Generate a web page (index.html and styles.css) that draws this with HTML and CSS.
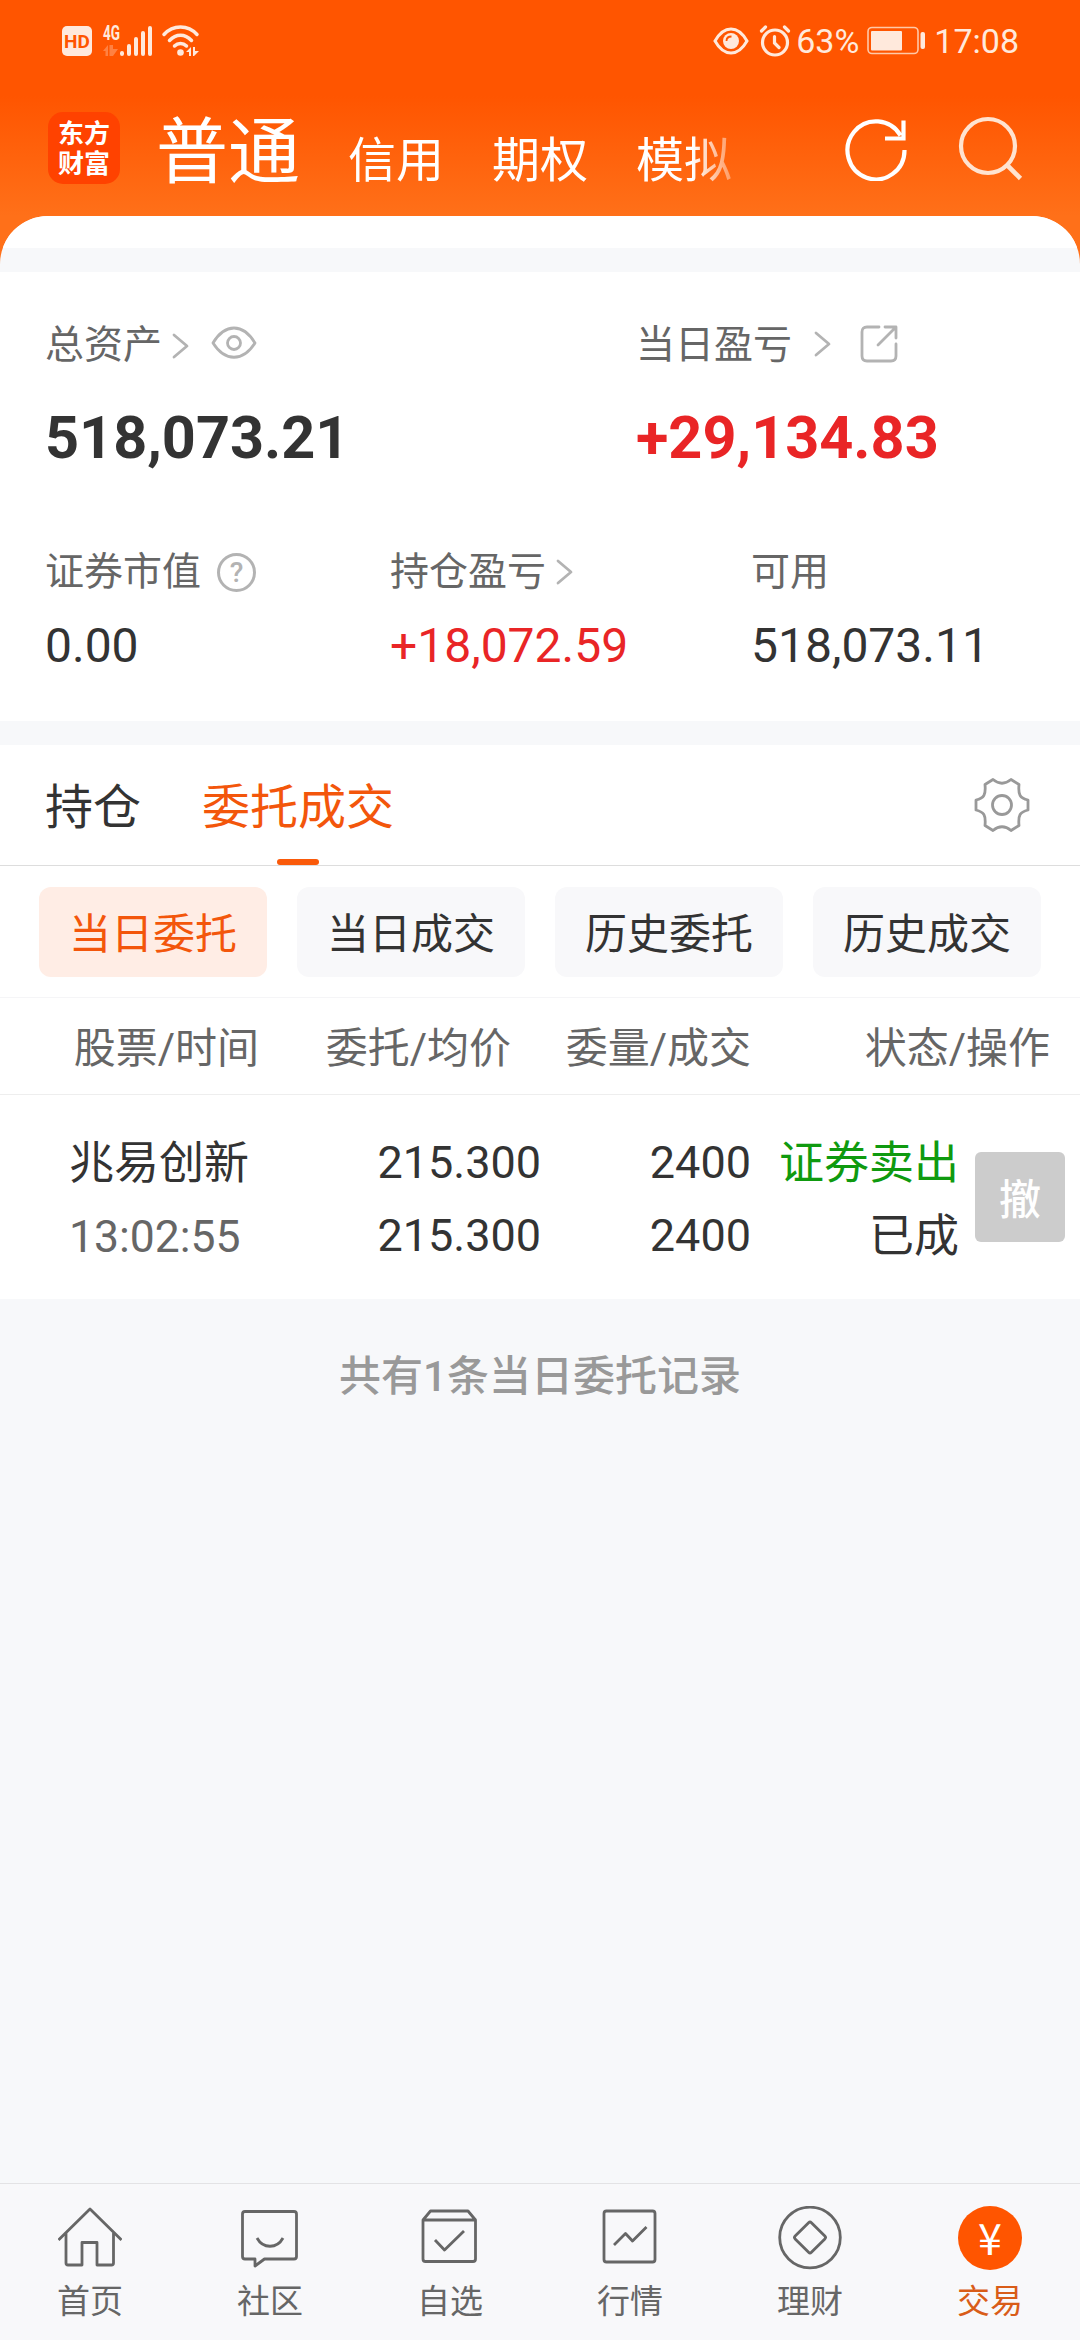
FILE: index.html
```html
<!DOCTYPE html>
<html lang="zh-CN">
<head>
    <meta charset="UTF-8">
    <meta name="viewport" content="width=device-width, initial-scale=1.0">
    <title>交易</title>
    <link rel="stylesheet" href="styles.css">
</head>
<body>
    <header class="header">
        <div class="status-bar">
            <div class="status-left">
                <span class="hd">HD</span>
                <svg class="signal" width="50" height="32" viewBox="0 0 50 32">
                    <text x="0" y="15" font-size="20" font-weight="700" textLength="17" lengthAdjust="spacingAndGlyphs">4G</text>
                    <path opacity=".3" d="M0 26l5-6v11h-2.500v-5zM6.500 20h2.500v11h-2.500zM9 20h1v4h5l-5 7h-1z"/>
                    <path stroke="#ffe9dc" stroke-width="4" stroke-linecap="round" d="M19 28v1M26 21v8M33 14v15M40 8v21M47 3v26"/>
                </svg>
                <svg class="wifi" width="38" height="32" viewBox="0 0 38 32">
                    <g fill="none" stroke="#ffe9dc" stroke-width="3.500" stroke-linecap="round">
                        <path d="M2 9.500C11-.5 26-.5 35 9.500"/>
                        <path d="M7.500 15.500C14 8.500 23 8.500 29.500 15.500"/>
                        <path d="M12.500 21C16 17.500 21 17.500 24.500 21"/>
                    </g>
                    <circle cx="18.500" cy="27.500" r="3.300"/>
                    <path d="M24 27l5-5v9h-2v-4zM31 22h2v4h4l-5 5h-1z"/>
                </svg>
            </div>
            <div class="status-right">
                <svg width="36" height="28" viewBox="0 0 36 28">
                    <path fill="none" stroke="#ffe9dc" stroke-width="3" d="M2 14C11-2 25-2 34 14C25 30 11 30 2 14z"/>
                    <circle cx="18" cy="14" r="8"/>
                    <path fill="none" stroke="#ff5500" stroke-width="1.800" d="M13.500 14q0-4.500 5-4.500"/>
                </svg>
                <svg class="alarm" width="32" height="32" viewBox="0 0 32 32">
                    <g fill="none" stroke="#ffe9dc" stroke-width="3.200" stroke-linecap="round">
                        <circle cx="16" cy="17.500" r="12.500"/>
                        <path d="M2.500 6L6.500 2M29.500 6L25.500 2M15.500 11.500V18L20 22.500"/>
                    </g>
                </svg>
                <span class="battery-text">63%</span>
                <svg class="battery" width="60" height="30" viewBox="0 0 60 30">
                    <rect x="1" y="1.500" width="50" height="26" rx="4" fill="none" stroke="#ffc9a8" stroke-width="1.600"/>
                    <rect x="4" y="5" width="31" height="19.500" rx="1"/>
                    <rect x="53.500" y="6" width="4.500" height="17" rx="2"/>
                </svg>
                <span>17:08</span>
            </div>
        </div>
        <nav class="top-nav">
            <div class="logo">东方<br>财富</div>
            <div class="accounts">
                <span class="account current">普通</span>
                <span class="account">信用</span>
                <span class="account">期权</span>
                <span class="account">模拟</span>
            </div>
            <svg class="refresh" width="64" height="64" viewBox="0 0 64 64">
                <path fill="none" stroke="#fff" stroke-width="4.200" d="M60.500 33A28.500 29 0 1 1 56.500 18.500M59.500 3.500V21.500H41"/>
            </svg>
            <svg class="search" width="66" height="66" viewBox="0 0 66 66">
                <circle cx="30" cy="30" r="27" fill="none" stroke="#ffe3d0" stroke-width="4.200"/>
                <path stroke="#ffe3d0" stroke-width="4.600" d="M48.500 48.500L62.500 62.500"/>
            </svg>
        </nav>
    </header>

    <main class="sheet">
        <div class="sheet-top"></div>
        <section class="assets">
            <div class="assets-main">
                <div class="asset">
                    <div class="label">
                        <span>总资产</span>
                        <svg class="chevron near" width="18" height="28" viewBox="0 0 18 28"><path d="M2 3L15 14L2 25"/></svg>
                        <svg class="eye" width="46" height="34" viewBox="0 0 46 34">
                            <path d="M2 17C14-3 32-3 44 17C32 36 14 36 2 17z"/>
                            <circle cx="23" cy="17" r="6.500"/>
                        </svg>
                    </div>
                    <div class="big">518,073.21</div>
                </div>
                <div class="asset">
                    <div class="label">
                        <span>当日盈亏</span>
                        <svg class="chevron far" width="18" height="28" viewBox="0 0 18 28"><path d="M2 3L15 14L2 25"/></svg>
                        <svg class="share" width="40" height="40" viewBox="0 0 40 40">
                            <path d="M20 3H8Q3 3 3 8V32Q3 37 8 37H32Q37 37 37 32V20M26 3H37V14M36 4L19 21"/>
                        </svg>
                    </div>
                    <div class="big red">+29,134.83</div>
                </div>
            </div>
            <div class="assets-sub">
                <div class="asset">
                    <div class="label"><span>证券市值</span><div class="help">?</div></div>
                    <div class="value">0.00</div>
                </div>
                <div class="asset">
                    <div class="label">
                        <span>持仓盈亏</span>
                        <svg class="chevron near" width="18" height="28" viewBox="0 0 18 28"><path d="M2 3L15 14L2 25"/></svg>
                    </div>
                    <div class="value red">+18,072.59</div>
                </div>
                <div class="asset">
                    <div class="label"><span>可用</span></div>
                    <div class="value">518,073.11</div>
                </div>
            </div>
        </section>

        <section class="orders">
            <div class="tabs">
                <span class="tab">持仓</span>
                <span class="tab active">委托成交</span>
                <svg class="gear" width="58" height="58" viewBox="-29 -29 58 58">
                    <path d="M-9-25.500Q0-18 9-25.500L17-20.500C16-10 18-7 26-5V5C18 7 16 10 17 20.500L9 25.500Q0 18-9 25.500L-17 20.500C-16 10-18 7-26 5V-5C-18-7-16-10-17-20.500Z"/>
                    <circle r="9.500"/>
                </svg>
            </div>
            <div class="chips">
                <span class="chip active">当日委托</span>
                <span class="chip">当日成交</span>
                <span class="chip">历史委托</span>
                <span class="chip">历史成交</span>
            </div>
            <div class="table-head">
                <span>股票/时间</span>
                <span>委托/均价</span>
                <span>委量/成交</span>
                <span>状态/操作</span>
            </div>
            <div class="order-row">
                <div class="stock">兆易创新<br><span class="time">13:02:55</span></div>
                <div>215.300<br>215.300</div>
                <div>2400<br>2400</div>
                <div class="state"><span class="green">证券卖出</span><br>已成</div>
                <button class="cancel">撤</button>
            </div>
        </section>
        <p class="summary">共有1条当日委托记录</p>
    </main>

    <footer class="bottom-nav">
        <div class="nav-item">
            <svg width="64" height="64" viewBox="0 0 64 64">
                <path d="M.5 34L32 3L63.500 34M8 27V57q0 2 2 2H24V36.500H39V59H53.500q2 0 2-2V27"/>
            </svg>
            <span>首页</span>
        </div>
        <div class="nav-item">
            <svg width="64" height="64" viewBox="0 0 64 64">
                <path d="M7 5.500H56q2.500 0 2.500 2.500V50.500q0 2.500-2.500 2.500H26.500L17 60V53H7q-2.500 0-2.500-2.500V8q0-2.500 2.500-2.500z"/>
                <path d="M19 32C25 43 39 43 45 32"/>
            </svg>
            <span>社区</span>
        </div>
        <div class="nav-item">
            <svg width="64" height="64" viewBox="0 0 64 64">
                <path d="M5 14V53q0 2.500 2.500 2.500H55q2.500 0 2.500-2.500V14zL12.500 5H50L57.500 14M17 34L26.500 44L46 25"/>
            </svg>
            <span>自选</span>
        </div>
        <div class="nav-item">
            <svg width="64" height="64" viewBox="0 0 64 64">
                <rect x="6" y="5" width="51" height="51" rx="2.500"/>
                <path d="M16 39L27.500 27.500L34.500 35L48.500 21"/>
            </svg>
            <span>行情</span>
        </div>
        <div class="nav-item">
            <svg width="64" height="64" viewBox="0 0 64 64">
                <circle cx="32" cy="31.500" r="30.300"/>
                <rect x="20.500" y="20" width="23" height="23" rx="2" transform="rotate(45 32 31.500)"/>
            </svg>
            <span>理财</span>
        </div>
        <div class="nav-item active">
            <div class="yen">¥</div>
            <span>交易</span>
        </div>
    </footer>
</body>
</html>
```
FILE: styles.css
```css
* {
    box-sizing: border-box;
}
body {
    margin: 0;
    width: 1080px;
    height: 2340px;
    display: flex;
    flex-direction: column;
    font-family: Roboto, "Noto Sans CJK SC", sans-serif;
    color: #333;
    background: #f7f8fa;
}
svg {
    display: block;
    flex: none;
}

/* header */
.header {
    height: 264px;
    background: linear-gradient(#ff5500 0, #ff5500 96px, #ff7019 216px);
    color: #fff;
}
.status-bar {
    height: 82px;
    display: flex;
    justify-content: space-between;
    align-items: center;
    padding: 0 61px 0 62px;
    font-size: 34px;
    color: #ffe9dc;
}
.status-bar svg {
    fill: #ffe9dc;
    overflow: visible;
}
.status-left,
.status-right {
    display: flex;
    align-items: center;
}
.hd {
    width: 30px;
    height: 30px;
    line-height: 31px;
    border-radius: 5px;
    background: #ffe9dc;
    color: #ff5500;
    font-size: 19px;
    font-weight: 700;
    text-align: center;
}
.signal {
    margin: 0 9px 0 11px;
}
.alarm {
    margin: 0 5px 0 10px;
}
.battery {
    margin: 0 7px 0 8px;
}
.top-nav {
    height: 134px;
    display: flex;
    align-items: center;
    padding: 0 56px 0 48px;
}
.logo {
    width: 72px;
    height: 72px;
    margin-top: -2px;
    padding-top: 7px;
    border-radius: 15px;
    background: #ff4200;
    font-size: 26px;
    font-weight: 700;
    line-height: 30px;
    text-align: center;
}
.accounts {
    width: 640px;
    margin-left: 36px;
    padding-top: 16px;
    display: flex;
    gap: 48px;
    align-items: baseline;
    font-size: 48px;
    line-height: 80px;
    -webkit-mask-image: linear-gradient(90deg, #000 536px, transparent 596px);
    mask-image: linear-gradient(90deg, #000 536px, transparent 596px);
}
.account {
    padding-top: 2px;
}
.account.current {
    padding-top: 0;
    margin-bottom: 3px;
    font-size: 72px;
}
.refresh {
    margin-left: 48px;
}
.search {
    margin-left: 50px;
}

/* assets */
.sheet {
    margin-top: -48px;
    border-radius: 48px 48px 0 0;
    overflow: hidden;
    background: #f7f8fa;
}
.sheet-top {
    height: 32px;
    margin-bottom: 24px;
    background: #fff;
}
.assets {
    height: 449px;
    padding: 49px 0 0 45px;
    background: #fff;
}
.assets-main {
    display: grid;
    grid-template-columns: 591px 1fr;
}
.assets-sub {
    display: grid;
    grid-template-columns: 345px 361px 1fr;
    margin-top: 73px;
}
.label {
    display: flex;
    align-items: center;
    height: 50px;
    font-size: 39px;
    line-height: 50px;
    color: #666;
}
.label span {
    padding-bottom: 3px;
}
.assets-sub .label span {
    padding-bottom: 1px;
}
.label svg {
    fill: none;
    stroke: #b3b3b3;
    stroke-width: 2.800;
    stroke-linecap: round;
    stroke-linejoin: round;
}
.chevron.near {
    margin-left: 10px;
}
.chevron.far {
    margin-top: -4px;
    margin-left: 22px;
}
.eye {
    margin-left: 21px;
    margin-top: -6px;
}
.share {
    margin-left: 27px;
    margin-top: -5px;
    stroke-width: 3.200;
}
.big {
    margin-top: 31px;
    font-size: 59.400px;
    font-weight: 700;
    line-height: 72px;
}
.value {
    margin-top: 22px;
    font-size: 48px;
    line-height: 54px;
}
.red {
    color: #e92526;
}
.help {
    width: 39px;
    height: 39px;
    margin-left: 16px;
    border: 3px solid #b3b3b3;
    border-radius: 50%;
    color: #b3b3b3;
    font-size: 28px;
    font-weight: 500;
    line-height: 33px;
    text-align: center;
}

/* orders */
.orders {
    margin-top: 24px;
    background: #fff;
}
.tabs {
    height: 121px;
    display: flex;
    gap: 61px;
    padding: 0 49px 0 45px;
    border-bottom: 1px solid #ddd;
    font-size: 48px;
    line-height: 126px;
}
.tab.active {
    position: relative;
    color: #f3560b;
}
.tab.active::after {
    content: "";
    position: absolute;
    left: 50%;
    bottom: 0;
    width: 42px;
    height: 6px;
    margin-left: -21px;
    border-radius: 3px;
    background: #fa5a0a;
}
.gear {
    margin: 31px 0 0 auto;
    fill: none;
    stroke: #999;
    stroke-width: 2.800;
    stroke-linejoin: round;
}
.chips {
    display: flex;
    gap: 30px;
    padding: 21px 39px 20px;
    border-bottom: 1px solid #f5f5f7;
}
.chip {
    flex: 1;
    height: 90px;
    border-radius: 12px;
    background: #f8f8fa;
    font-size: 42px;
    line-height: 95px;
    text-align: center;
}
.chip.active {
    background: #ffede5;
    color: #f3560b;
}
.table-head {
    display: grid;
    grid-template-columns: 259px 252px 240px 299px;
    height: 97px;
    border-bottom: 1px solid #eee;
    font-size: 42px;
    line-height: 102px;
    text-align: right;
    color: #666;
}
.order-row {
    display: grid;
    grid-template-columns: 250px 221px 210px 208px 90px;
    height: 204px;
    padding: 31px 0 0 70px;
    font-size: 45px;
    line-height: 73px;
    text-align: right;
}
.stock {
    margin-left: -1px;
    text-align: left;
}
.stock,
.state {
    padding-top: 1px;
}
.time {
    font-size: 44.500px;
    color: #666;
}
.green {
    color: #0f9a0f;
}
.cancel {
    width: 90px;
    height: 90px;
    margin: 26px 0 0 16px;
    padding: 0 0 2px;
    border: 0;
    border-radius: 6px;
    background: #ccc;
    color: #fff;
    font-family: inherit;
    font-size: 42px;
    font-weight: 500;
}
.summary {
    margin: 50px 0 0;
    font-size: 42px;
    font-weight: 500;
    line-height: 56px;
    text-align: center;
    color: #999;
}

/* bottom nav */
.bottom-nav {
    display: grid;
    grid-template-columns: repeat(6, 1fr);
    height: 157px;
    margin-top: auto;
    padding-top: 22px;
    border-top: 1px solid #e3e3e5;
    background: #f8f8fa;
}
.nav-item {
    display: flex;
    flex-direction: column;
    align-items: center;
    gap: 12px;
    font-size: 33px;
    line-height: 40px;
    color: #666;
}
.nav-item svg {
    fill: none;
    stroke: #666;
    stroke-width: 2.800;
    stroke-linejoin: round;
}
.nav-item.active {
    color: #d95c18;
}
.yen {
    width: 64px;
    height: 64px;
    border-radius: 50%;
    background: #ff5500;
    color: #fff;
    font-family: "Noto Sans CJK SC", sans-serif;
    font-size: 43px;
    line-height: 60px;
    text-align: center;
}
```
